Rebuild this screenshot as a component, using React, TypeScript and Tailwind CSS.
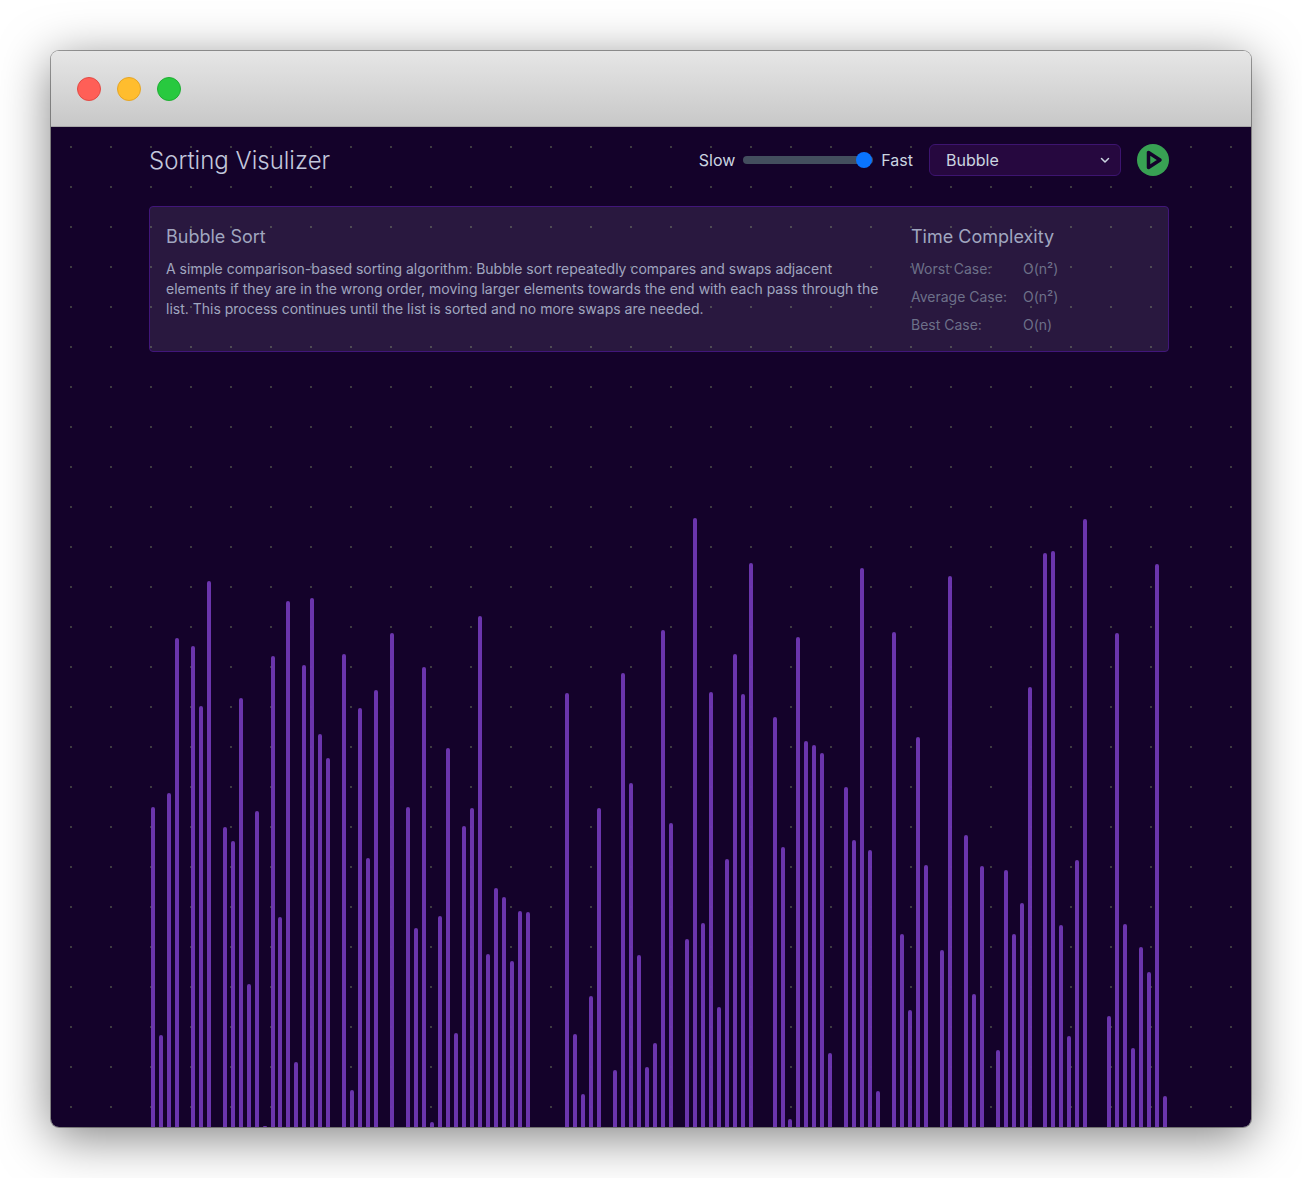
const TOPS = [
  807, 1035, 793, 638, 0, 646, 706, 581, 0, 827, 841, 698, 984, 811, 1126, 656,
  917, 601, 1062, 665, 598, 734, 758, 0, 654, 1090, 708, 858, 690, 0, 633, 0,
  807, 928, 667, 1122, 916, 748, 1033, 826, 808, 616, 954, 888, 897, 961, 911, 912,
  0, 0, 0, 0, 693, 1034, 1094, 996, 808, 0, 1070, 673, 783, 955, 1067, 1043,
  630, 823, 0, 939, 518, 923, 692, 1007, 859, 654, 694, 563, 0, 0, 717, 847,
  1119, 637, 741, 745, 753, 1053, 0, 787, 840, 568, 850, 1091, 0, 632, 934, 1010,
  737, 865, 0, 950, 576, 0, 835, 994, 866, 0, 1050, 870, 934, 903, 687, 0,
  553, 551, 925, 1036, 860, 519, 0, 0, 1016, 633, 924, 1048, 947, 972, 564, 1096,
];

const BOTTOM = 1127;

const COMPLEXITY = [
  { label: "Worst Case:", value: "O(n²)" },
  { label: "Average Case:", value: "O(n²)" },
  { label: "Best Case:", value: "O(n)" },
];

function TrafficLight({ className }: { className: string }) {
  return <span className={`h-6 w-6 rounded-full border ${className}`} />;
}

function Speed() {
  return (
    <div className="flex items-center gap-2 text-base text-[#cbd5e0]">
      <span>Slow</span>
      <div className="relative h-2 w-[130px] rounded-full bg-[#434e5e]">
        <span className="absolute right-[1px] top-[-4px] h-4 w-4 rounded-full bg-[#0a74ff]" />
      </div>
      <span>Fast</span>
    </div>
  );
}

function AlgorithmSelect() {
  return (
    <div className="relative w-48">
      <select
        defaultValue="bubble"
        className="h-8 w-full appearance-none rounded-md border border-[#3d1470] bg-[#26083f] pl-4 pr-8 text-base text-[#cbd5e0]"
      >
        <option value="bubble">Bubble</option>
        <option value="quick">Quick</option>
        <option value="merge">Merge</option>
      </select>
      <svg
        viewBox="0 0 24 24"
        className="pointer-events-none absolute right-[10px] top-[10px] h-3 w-3 text-[#cbd5e0]"
        fill="none"
        stroke="currentColor"
        strokeWidth="3"
        strokeLinecap="round"
        strokeLinejoin="round"
      >
        <path d="M5 9l7 7 7-7" />
      </svg>
    </div>
  );
}

function PlayButton() {
  return (
    <button type="button" aria-label="Play" className="flex h-8 w-8 items-center justify-center rounded-full bg-[#38a153]">
      <svg viewBox="0 0 32 32" className="h-8 w-8">
        <path d="M11.5 8.5v15l11.5-7.5z" fill="#38a153" stroke="#14022a" strokeWidth="3.5" strokeLinejoin="round" />
      </svg>
    </button>
  );
}

function InfoPanel() {
  return (
    <section className="mt-[13px] flex rounded-sm border border-[#41167a] bg-[#f0deff]/10 p-4">
      <div className="w-[745px] pr-[29px]">
        <h2 className="text-lg text-[#a0a6bf]">Bubble Sort</h2>
        <p className="mt-2 text-sm text-[#a0a6bf]">
          A simple comparison-based sorting algorithm. Bubble sort repeatedly compares and swaps adjacent elements if
          they are in the wrong order, moving larger elements towards the end with each pass through the list. This
          process continues until the list is sorted and no more swaps are needed.
        </p>
      </div>
      <div>
        <h2 className="text-lg text-[#a0a6bf]">Time Complexity</h2>
        <dl className="mt-2 flex flex-col gap-2 text-sm text-[#6d7089]">
          {COMPLEXITY.map((row) => (
            <div key={row.label} className="flex">
              <dt className="w-28">{row.label}</dt>
              <dd>{row.value}</dd>
            </div>
          ))}
        </dl>
      </div>
    </section>
  );
}

function Bars() {
  return (
    <div className="flex flex-1 items-end justify-around overflow-hidden">
      {TOPS.map((top, i) => (
        <div
          key={i}
          className="w-1 rounded-t-sm bg-[#7038b4]/95"
          style={{ height: top === 0 ? 0 : BOTTOM - top }}
        />
      ))}
    </div>
  );
}

export default function App() {
  return (
    <div className="min-h-[1178px] bg-white p-[51px] font-['Inter',sans-serif]">
      <div className="flex h-[1076px] w-[1200px] flex-col overflow-hidden rounded-lg shadow-[0_0_0_1px_rgba(0,0,0,0.35),0_10px_50px_rgba(0,0,0,0.5)]">
        <div className="flex h-[76px] shrink-0 items-center gap-4 border-b border-[#a8a8a8] bg-gradient-to-b from-[#e6e6e6] to-[#c8c8c8] pl-[26px]">
          <TrafficLight className="border-[#e24b45] bg-[#ff5f57]" />
          <TrafficLight className="border-[#e5a526] bg-[#ffbd2e]" />
          <TrafficLight className="border-[#1fae33] bg-[#28c93f]" />
        </div>
        <main className="flex min-h-0 flex-1 flex-col bg-[#14022a] bg-[radial-gradient(circle,#3e3c40_1px,transparent_1px)] bg-[size:40px_40px] pl-[98px]">
          <div className="flex h-full w-[1020px] flex-col">
            <header className="flex h-[66px] shrink-0 items-center justify-between">
              <h1 className="pt-px text-2xl font-light text-[#c3c7dc]">Sorting Visulizer</h1>
              <div className="flex items-center gap-4">
                <Speed />
                <AlgorithmSelect />
                <PlayButton />
              </div>
            </header>
            <InfoPanel />
            <Bars />
          </div>
        </main>
      </div>
    </div>
  );
}
